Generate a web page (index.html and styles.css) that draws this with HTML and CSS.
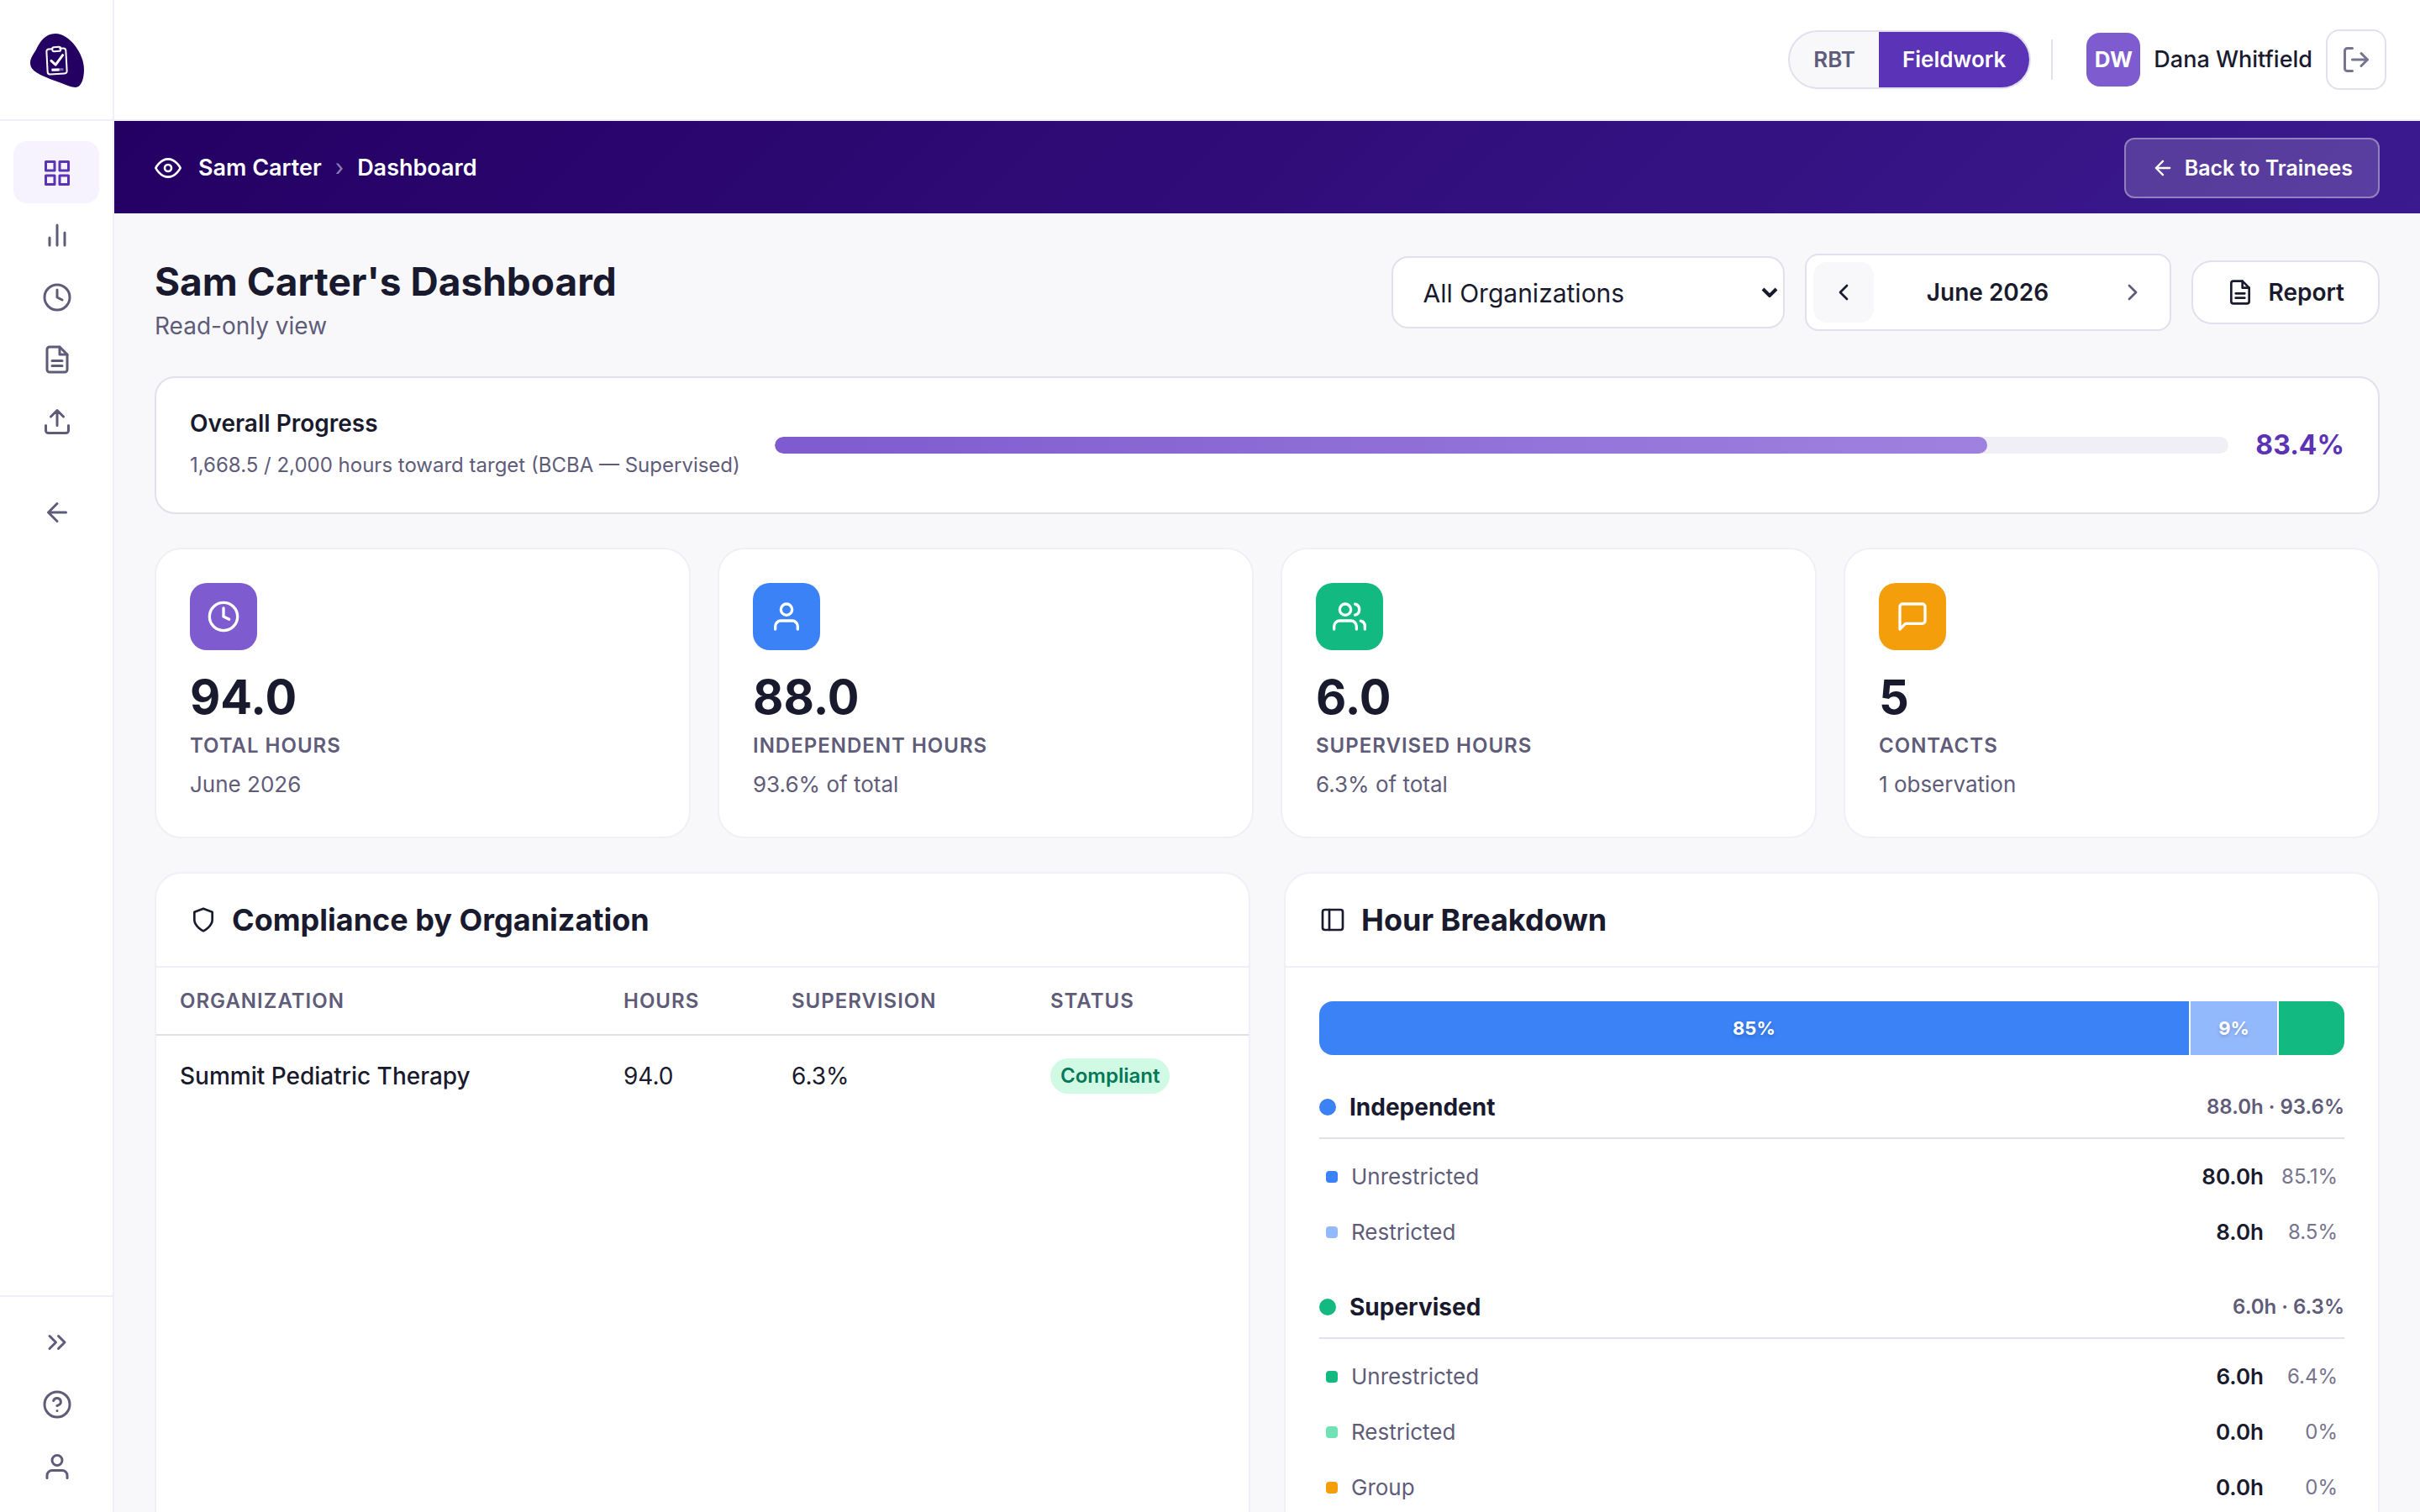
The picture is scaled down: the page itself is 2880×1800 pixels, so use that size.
FILE: index.html
```
<!DOCTYPE html>
<html lang="en">
<head>
<meta charset="utf-8">
<title>Sam Carter's Dashboard</title>
<link rel="stylesheet" href="styles.css">
</head>
<body>
<svg class="sprite" aria-hidden="true">
  <symbol id="i-grid" viewBox="0 0 24 24"><rect x="3" y="3" width="7" height="7"/><rect x="14" y="3" width="7" height="7"/><rect x="14" y="14" width="7" height="7"/><rect x="3" y="14" width="7" height="7"/></symbol>
  <symbol id="i-bars" viewBox="0 0 24 24"><path d="M18 20V10M12 20V4M6 20v-6"/></symbol>
  <symbol id="i-clock" viewBox="0 0 24 24"><circle cx="12" cy="12" r="10"/><path d="M12 6v6l4 2"/></symbol>
  <symbol id="i-file" viewBox="0 0 24 24"><path d="M14 2H6a2 2 0 0 0-2 2v16a2 2 0 0 0 2 2h12a2 2 0 0 0 2-2V8z"/><path d="M14 2v6h6M16 13H8M16 17H8"/></symbol>
  <symbol id="i-upload" viewBox="0 0 24 24"><path d="M21 15v4a2 2 0 0 1-2 2H5a2 2 0 0 1-2-2v-4M17 8l-5-5-5 5M12 3v12"/></symbol>
  <symbol id="i-back" viewBox="0 0 24 24"><path d="M19 12H5M12 19l-7-7 7-7"/></symbol>
  <symbol id="i-expand" viewBox="0 0 24 24"><path d="M13 17l5-5-5-5M6 17l5-5-5-5"/></symbol>
  <symbol id="i-help" viewBox="0 0 24 24"><circle cx="12" cy="12" r="10"/><path d="M9.09 9a3 3 0 0 1 5.83 1c0 2-3 3-3 3M12 17h.01"/></symbol>
  <symbol id="i-user" viewBox="0 0 24 24"><path d="M20 21v-2a4 4 0 0 0-4-4H8a4 4 0 0 0-4 4v2"/><circle cx="12" cy="7" r="4"/></symbol>
  <symbol id="i-users" viewBox="0 0 24 24"><path d="M17 21v-2a4 4 0 0 0-4-4H5a4 4 0 0 0-4 4v2"/><circle cx="9" cy="7" r="4"/><path d="M23 21v-2a4 4 0 0 0-3-3.87M16 3.13a4 4 0 0 1 0 7.75"/></symbol>
  <symbol id="i-chat" viewBox="0 0 24 24"><path d="M21 15a2 2 0 0 1-2 2H7l-4 4V5a2 2 0 0 1 2-2h14a2 2 0 0 1 2 2z"/></symbol>
  <symbol id="i-eye" viewBox="0 0 24 24"><path d="M1 12s4-8 11-8 11 8 11 8-4 8-11 8-11-8-11-8z"/><circle cx="12" cy="12" r="3"/></symbol>
  <symbol id="i-logout" viewBox="0 0 24 24"><path d="M9 21H5a2 2 0 0 1-2-2V5a2 2 0 0 1 2-2h4M16 17l5-5-5-5M21 12H9"/></symbol>
  <symbol id="i-left" viewBox="0 0 24 24"><path d="M15 18l-6-6 6-6"/></symbol>
  <symbol id="i-right" viewBox="0 0 24 24"><path d="M9 18l6-6-6-6"/></symbol>
  <symbol id="i-shield" viewBox="0 0 24 24"><path d="M12 22s8-4 8-10V5l-8-3-8 3v7c0 6 8 10 8 10z"/></symbol>
  <symbol id="i-panel" viewBox="0 0 24 24"><rect x="3" y="3" width="18" height="18" rx="2"/><path d="M9 3v18"/></symbol>
</svg>

<div class="shell">
  <aside class="sidebar">
    <a class="brand" href="#" aria-label="Home">
      <svg class="logo" viewBox="0 0 64 64" aria-hidden="true">
        <path fill="#240063" d="M30 0c8 0 17 6 23 14 7 9 11 19 11 29 0 12-4 21-10 21-6 0-16-5-28-9C12 49 0 45 0 35c0-6 3-9 7-16C12 9 18 0 30 0z"/>
        <g transform="rotate(-3 32 33)" fill="none" stroke="#fff" stroke-width="2" stroke-linecap="round" stroke-linejoin="round">
          <path d="M27 18h-4a3 3 0 0 0-3 3v24a3 3 0 0 0 3 3h17a3 3 0 0 0 3-3V21a3 3 0 0 0-3-3h-4"/>
          <rect x="27" y="16" width="10" height="5" rx="2"/>
          <path stroke-width="3" d="M25 32l5 5 9-11"/>
          <path stroke-opacity=".4" stroke-width="3" stroke-linecap="butt" d="M25 43h14"/>
          <path stroke-width="3" stroke-linecap="butt" d="M25 43h9"/>
        </g>
      </svg>
    </a>
    <nav class="nav">
      <a class="nav-item active" href="#" aria-label="Dashboard"><svg class="icon"><use href="#i-grid"/></svg></a>
      <a class="nav-item" href="#" aria-label="Analytics"><svg class="icon"><use href="#i-bars"/></svg></a>
      <a class="nav-item" href="#" aria-label="Hours"><svg class="icon"><use href="#i-clock"/></svg></a>
      <a class="nav-item" href="#" aria-label="Documents"><svg class="icon"><use href="#i-file"/></svg></a>
      <a class="nav-item" href="#" aria-label="Upload"><svg class="icon"><use href="#i-upload"/></svg></a>
      <a class="nav-item leave" href="#" aria-label="Back"><svg class="icon"><use href="#i-back"/></svg></a>
    </nav>
    <div class="nav nav-bottom">
      <button class="nav-item" aria-label="Expand"><svg class="icon"><use href="#i-expand"/></svg></button>
      <a class="nav-item" href="#" aria-label="Help"><svg class="icon"><use href="#i-help"/></svg></a>
      <a class="nav-item" href="#" aria-label="Profile"><svg class="icon"><use href="#i-user"/></svg></a>
    </div>
  </aside>

  <div class="column">
    <header class="topbar">
      <div class="toggle">
        <button class="toggle-option">RBT</button>
        <button class="toggle-option selected">Fieldwork</button>
      </div>
      <span class="divider"></span>
      <div class="account">
        <span class="avatar">DW</span>
        <span class="account-name">Dana Whitfield</span>
        <button class="logout" aria-label="Log out"><svg class="icon"><use href="#i-logout"/></svg></button>
      </div>
    </header>

    <div class="banner">
      <svg class="icon icon-md"><use href="#i-eye"/></svg>
      <div class="crumbs"><span>Sam Carter</span><span class="crumb-sep">›</span><span>Dashboard</span></div>
      <button class="back-button"><svg class="icon icon-sm"><use href="#i-back"/></svg>Back to Trainees</button>
    </div>

    <main class="page">
      <div class="page-head">
        <div>
          <h1 class="title">Sam Carter's Dashboard</h1>
          <p class="subtitle">Read-only view</p>
        </div>
        <div class="controls">
          <div class="select">
            <select aria-label="Organization"><option>All Organizations</option></select>
            <svg class="select-arrow" viewBox="0 0 20 12" aria-hidden="true"><path d="M2 2l8 8 8-8"/></svg>
          </div>
          <div class="month">
            <button class="month-step prev" aria-label="Previous month"><svg class="icon icon-md"><use href="#i-left"/></svg></button>
            <span class="month-name">June 2026</span>
            <button class="month-step" aria-label="Next month"><svg class="icon icon-md"><use href="#i-right"/></svg></button>
          </div>
          <button class="report"><svg class="icon icon-md"><use href="#i-file"/></svg>Report</button>
        </div>
      </div>

      <section class="progress">
        <div class="progress-text">
          <h2 class="progress-title">Overall Progress</h2>
          <p class="progress-note">1,668.5 / 2,000 hours toward target (BCBA — Supervised)</p>
        </div>
        <div class="track"><div class="fill" style="width: 83.4%"></div></div>
        <strong class="percent">83.4%</strong>
      </section>

      <section class="stats">
        <article class="stat">
          <span class="stat-icon violet"><svg class="icon icon-lg"><use href="#i-clock"/></svg></span>
          <strong class="stat-value">94.0</strong><span class="stat-label">Total hours</span><span class="stat-note">June 2026</span>
        </article>
        <article class="stat">
          <span class="stat-icon blue"><svg class="icon icon-lg"><use href="#i-user"/></svg></span>
          <strong class="stat-value">88.0</strong><span class="stat-label">Independent hours</span><span class="stat-note">93.6% of total</span>
        </article>
        <article class="stat">
          <span class="stat-icon green"><svg class="icon icon-lg"><use href="#i-users"/></svg></span>
          <strong class="stat-value">6.0</strong><span class="stat-label">Supervised hours</span><span class="stat-note">6.3% of total</span>
        </article>
        <article class="stat">
          <span class="stat-icon amber"><svg class="icon icon-lg"><use href="#i-chat"/></svg></span>
          <strong class="stat-value">5</strong><span class="stat-label">Contacts</span><span class="stat-note">1 observation</span>
        </article>
      </section>

      <section class="panels">
        <article class="panel">
          <h2 class="panel-head"><svg class="icon icon-md"><use href="#i-shield"/></svg>Compliance by Organization</h2>
          <table class="table">
            <colgroup><col class="col-org"><col class="col-hours"><col class="col-sup"><col></colgroup>
            <thead><tr><th>Organization</th><th>Hours</th><th>Supervision</th><th>Status</th></tr></thead>
            <tbody><tr><td class="org">Summit Pediatric Therapy</td><td>94.0</td><td>6.3%</td><td><span class="badge">Compliant</span></td></tr></tbody>
          </table>
        </article>

        <article class="panel">
          <h2 class="panel-head"><svg class="icon icon-md"><use href="#i-panel"/></svg>Hour Breakdown</h2>
          <div class="breakdown">
            <div class="stack">
              <span class="segment blue" style="flex-grow: 85.1">85%</span>
              <span class="segment blue-light" style="flex-grow: 8.5">9%</span>
              <span class="segment green" style="flex-grow: 6.4"></span>
            </div>
            <div class="group">
              <div class="group-head"><span class="dot blue"></span><h3 class="group-name">Independent</h3><span class="group-total">88.0h · 93.6%</span></div>
              <ul class="rows">
                <li class="row"><span class="chip blue"></span><span class="row-name">Unrestricted</span><b class="row-hours">80.0h</b><span class="row-share">85.1%</span></li>
                <li class="row"><span class="chip blue-light"></span><span class="row-name">Restricted</span><b class="row-hours">8.0h</b><span class="row-share">8.5%</span></li>
              </ul>
            </div>
            <div class="group">
              <div class="group-head"><span class="dot green"></span><h3 class="group-name">Supervised</h3><span class="group-total">6.0h · 6.3%</span></div>
              <ul class="rows">
                <li class="row"><span class="chip green"></span><span class="row-name">Unrestricted</span><b class="row-hours">6.0h</b><span class="row-share">6.4%</span></li>
                <li class="row"><span class="chip green-light"></span><span class="row-name">Restricted</span><b class="row-hours">0.0h</b><span class="row-share">0%</span></li>
                <li class="row"><span class="chip amber"></span><span class="row-name">Group</span><b class="row-hours">0.0h</b><span class="row-share">0%</span></li>
              </ul>
            </div>
          </div>
        </article>
      </section>
    </main>
  </div>
</div>
</body>
</html>
```

FILE: styles.css
```
:root {
  --ink: #1a1a2e;
  --muted: #5f5c7a;
  --faint: #77748f;
  --line: #e2e0ec;
  --line-soft: #f0eff6;
  --canvas: #f8f8fb;
  --purple: #5b33b6;
  --violet: #7e5bce;
  --blue: #3b82f6;
  --blue-light: #93b9fd;
  --green: #12b981;
  --green-light: #70e3b5;
  --amber: #f59e0b;
}

* { box-sizing: border-box; margin: 0; padding: 0; }

body {
  font-family: Inter, "Noto Sans", sans-serif;
  font-size: 28px;
  line-height: 40px;
  color: var(--ink);
  background: var(--canvas);
}

button, select { font: inherit; color: inherit; background: none; border: 0; cursor: pointer; }
a { color: inherit; text-decoration: none; }
ul { list-style: none; }

.sprite { display: none; }

.icon {
  width: 36px;
  height: 36px;
  flex: none;
  fill: none;
  stroke: currentColor;
  stroke-width: 2;
  stroke-linecap: round;
  stroke-linejoin: round;
}
.icon-sm { width: 28px; height: 28px; }
.icon-md { width: 32px; height: 32px; }
.icon-lg { width: 40px; height: 40px; }

.blue { background: var(--blue); }
.blue-light { background: var(--blue-light); }
.green { background: var(--green); }
.green-light { background: var(--green-light); }
.amber { background: var(--amber); }
.violet { background: var(--violet); }

.shell { display: flex; height: 100vh; overflow: hidden; }

/* Sidebar */
.sidebar {
  flex: none;
  width: 136px;
  display: flex;
  flex-direction: column;
  background: #fff;
  border-right: 2px solid var(--line-soft);
}
.brand {
  height: 144px;
  display: flex;
  align-items: center;
  justify-content: center;
  padding: 2px 0 0 2px;
  border-bottom: 2px solid var(--line-soft);
}
.logo { width: 64px; height: 64px; }
.nav { flex: 1; display: flex; flex-direction: column; padding: 24px 16px; }
.nav-bottom { flex: none; padding: 16px 16px 18px; border-top: 2px solid var(--line-soft); }
.nav-item {
  height: 74px;
  display: flex;
  align-items: center;
  justify-content: center;
  padding: 2px 0 0 2px;
  border-radius: 16px;
  color: var(--muted);
}
.nav-item.active { background: #f6f3fe; color: var(--purple); }
.leave { margin-top: 34px; }

/* Top bar */
.column { flex: 1; min-width: 0; overflow-y: auto; scrollbar-width: none; }
.topbar {
  height: 144px;
  display: flex;
  align-items: center;
  justify-content: flex-end;
  padding: 0 40px;
  background: #fff;
  border-bottom: 2px solid var(--line-soft);
}
.toggle {
  height: 70px;
  display: flex;
  overflow: hidden;
  border: 2px solid var(--line);
  border-radius: 35px;
  background: var(--canvas);
}
.toggle-option { padding: 0 28px; font-size: 26px; font-weight: 600; color: var(--muted); }
.toggle-option.selected { background: var(--purple); color: #fff; }
.divider { width: 2px; height: 48px; margin: 0 40px 0 24px; background: var(--line); }
.account { display: flex; align-items: center; gap: 16px; }
.avatar {
  width: 64px;
  height: 64px;
  display: flex;
  align-items: center;
  justify-content: center;
  border-radius: 16px;
  background: var(--violet);
  color: #fff;
  font-size: 26px;
  font-weight: 700;
}
.account-name { font-size: 27px; font-weight: 500; }
.logout {
  width: 72px;
  height: 72px;
  display: flex;
  align-items: center;
  justify-content: center;
  border: 2px solid var(--line);
  border-radius: 16px;
  color: var(--faint);
}

/* Viewing banner */
.banner {
  display: flex;
  align-items: center;
  padding: 20px 48px 18px;
  background: linear-gradient(135deg, #240063, #3b1a8f);
  color: #fff;
}
.crumbs { display: flex; gap: 16px; margin-left: 20px; font-size: 27px; font-weight: 600; }
.crumb-sep { font-weight: 400; color: #8f7db8; }
.back-button {
  height: 72px;
  margin-left: auto;
  display: flex;
  align-items: center;
  gap: 12px;
  padding: 0 30px;
  border: 2px solid rgba(255, 255, 255, .35);
  border-radius: 12px;
  background: rgba(255, 255, 255, .16);
  font-size: 25px;
  font-weight: 600;
}

/* Page head */
.page { padding: 48px; display: flex; flex-direction: column; gap: 40px; }
.page-head { display: flex; justify-content: space-between; }
.title { font-size: 46px; line-height: 66px; font-weight: 700; }
.subtitle { font-size: 28px; line-height: 40px; color: var(--muted); }
.controls { height: 92px; display: flex; align-items: center; gap: 24px; }
.select { display: grid; align-items: center; }
.select select {
  grid-area: 1 / 1;
  width: 468px;
  height: 86px;
  padding: 2px 36px 0;
  appearance: none;
  border: 2px solid var(--line);
  border-radius: 20px;
  background: #fff;
  font-size: 30px;
}
.select-arrow {
  grid-area: 1 / 1;
  justify-self: end;
  width: 20px;
  height: 12px;
  margin-right: 8px;
  pointer-events: none;
  fill: none;
  stroke: var(--ink);
  stroke-width: 4;
}
.month {
  display: flex;
  align-items: center;
  padding: 8px;
  border: 2px solid var(--line);
  border-radius: 16px;
  background: #fff;
}
.month-step {
  width: 72px;
  height: 72px;
  display: flex;
  align-items: center;
  justify-content: center;
  border-radius: 16px;
  color: var(--muted);
}
.month-step.prev { background: var(--canvas); color: var(--ink); }
.month-name { width: 272px; text-align: center; font-size: 28px; font-weight: 600; }
.report {
  height: 76px;
  display: flex;
  align-items: center;
  gap: 18px;
  padding: 0 40px;
  border: 2px solid var(--line);
  border-radius: 24px;
  background: #fff;
  font-weight: 600;
}

/* Overall progress */
.progress {
  display: flex;
  align-items: center;
  gap: 32px;
  padding: 30px 40px;
  border: 2px solid var(--line);
  border-radius: 24px;
  background: #fff;
}
.progress-text { flex: none; min-width: 664px; }
.progress-title { font-size: 28px; line-height: 48px; font-weight: 600; }
.progress-note { font-size: 24px; line-height: 52px; color: var(--muted); }
.track { flex: 1; height: 20px; border-radius: 10px; background: var(--line-soft); overflow: hidden; }
.fill { height: 100%; border-radius: 10px; background: linear-gradient(90deg, #7e5bce, #9f82df); }
.percent { font-size: 32px; font-weight: 700; color: var(--purple); }

/* Stat cards */
.stats { display: grid; grid-template-columns: repeat(4, 1fr); gap: 32px; }
.stat {
  display: flex;
  flex-direction: column;
  padding: 40px 40px 38px;
  border: 2px solid var(--line-soft);
  border-radius: 32px;
  background: #fff;
}
.stat-icon {
  width: 80px;
  height: 80px;
  display: flex;
  align-items: center;
  justify-content: center;
  border-radius: 20px;
  color: #fff;
}
.stat-value { margin-top: 18px; font-size: 56px; line-height: 76px; font-weight: 700; }
.stat-label { font-size: 24px; line-height: 40px; font-weight: 600; color: var(--muted); text-transform: uppercase; letter-spacing: 1px; }
.stat-note { margin-top: 2px; font-size: 26px; line-height: 48px; color: var(--muted); }

/* Panels */
.panels { display: grid; grid-template-columns: 1fr 1fr; gap: 40px; }
.panel {
  border: 2px solid var(--line-soft);
  border-radius: 32px;
  background: #fff;
}
.panel-head {
  height: 112px;
  display: flex;
  align-items: center;
  gap: 18px;
  padding: 0 40px;
  border-bottom: 2px solid var(--line-soft);
  font-size: 36px;
  font-weight: 700;
}
.table { width: 100%; table-layout: fixed; border-collapse: collapse; text-align: left; }
.col-org { width: 528px; }
.col-hours { width: 200px; }
.col-sup { width: 308px; }
.table th, .table td { padding: 0 28px; }
.table th {
  height: 80px;
  border-bottom: 2px solid var(--line);
  font-size: 24px;
  font-weight: 600;
  color: var(--muted);
  text-transform: uppercase;
  letter-spacing: 1px;
}
.table td { height: 96px; font-size: 28px; }
.table .org { font-weight: 500; }
.badge {
  display: inline-block;
  padding: 0 12px;
  border-radius: 21px;
  background: #d1fae5;
  color: #047857;
  font-size: 24px;
  line-height: 42px;
  font-weight: 600;
}

/* Hour breakdown */
.breakdown { padding: 40px; }
.stack { height: 64px; display: flex; gap: 2px; border-radius: 16px; overflow: hidden; margin-bottom: 42px; }
.segment {
  flex-basis: 0;
  display: flex;
  align-items: center;
  justify-content: center;
  color: #fff;
  font-size: 22px;
  font-weight: 700;
  text-shadow: 0 2px 4px rgba(0, 0, 0, .2);
}
.group + .group { margin-top: 36px; }
.group-head { display: flex; align-items: center; gap: 16px; padding-bottom: 16px; border-bottom: 2px solid var(--line); }
.dot { width: 20px; height: 20px; border-radius: 50%; }
.group-name { font-size: 28px; line-height: 40px; font-weight: 700; }
.group-total { margin-left: auto; font-size: 24px; font-weight: 600; color: var(--muted); }
.rows { padding-top: 12px; }
.row { height: 66px; display: flex; align-items: center; padding: 0 8px; }
.chip { width: 14px; height: 14px; margin-right: 16px; border-radius: 4px; }
.row-name { flex: 1; font-size: 26px; color: var(--muted); }
.row-hours { font-size: 26px; font-weight: 600; }
.row-share { width: 88px; text-align: right; font-size: 24px; color: var(--faint); }
```
